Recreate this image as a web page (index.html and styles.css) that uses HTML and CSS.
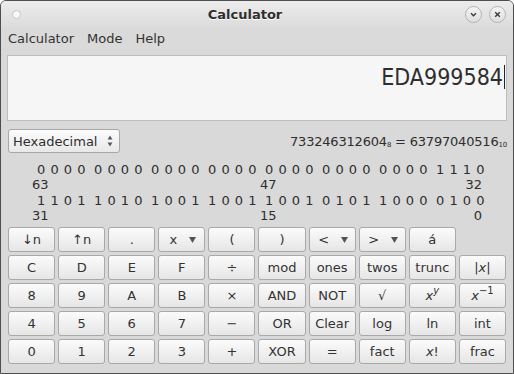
FILE: index.html
```html
<!DOCTYPE html>
<html lang="en">
<head>
  <meta charset="UTF-8">
  <title>Calculator</title>
  <link rel="stylesheet" href="styles.css">
</head>
<body>
  <div class="window">
    <header class="titlebar">
      <div class="title-left"><span class="dot"></span></div>
      <h1>Calculator</h1>
      <div class="wm-buttons">
        <span class="wm-btn">
          <svg width="15" height="15" viewBox="0 0 15 15"><path d="M5 6.3 L7.5 8.8 L10 6.3" fill="none" stroke="#3c3c3c" stroke-width="1.4"/></svg>
        </span>
        <span class="wm-btn">
          <svg width="15" height="15" viewBox="0 0 15 15"><path d="M5.2 5.2 L9.8 9.8 M9.8 5.2 L5.2 9.8" fill="none" stroke="#3c3c3c" stroke-width="1.4"/></svg>
        </span>
      </div>
    </header>

    <nav class="menubar">
      <span>Calculator</span>
      <span>Mode</span>
      <span>Help</span>
    </nav>

    <div class="display">
      <span class="value">EDA999584</span><span class="cursor"></span>
    </div>

    <div class="base-row">
      <div class="combo">
        <span>Hexadecimal</span>
        <svg width="8" height="14" viewBox="0 0 8 14"><path d="M4 1.5 L6.5 5.5 L1.5 5.5 Z M4 12.5 L6.5 8.5 L1.5 8.5 Z" fill="#5a5a5a"/></svg>
      </div>
      <div class="conv">733246312604<sub>8</sub> = 63797040516<sub>10</sub></div>
    </div>

    <div class="bits">
      <span class="grp">0 0 0 0</span><span class="grp">0 0 0 0</span><span class="grp">0 0 0 0</span><span class="grp">0 0 0 0</span>
      <span class="grp">0 0 0 0</span><span class="grp">0 0 0 0</span><span class="grp">0 0 0 0</span><span class="grp">1 1 1 0</span>
      <span class="lbl">63</span><span class="lbl mid">47</span><span class="lbl end">32</span>
      <span class="grp">1 1 0 1</span><span class="grp">1 0 1 0</span><span class="grp">1 0 0 1</span><span class="grp">1 0 0 1</span>
      <span class="grp">1 0 0 1</span><span class="grp">0 1 0 1</span><span class="grp">1 0 0 0</span><span class="grp">0 1 0 0</span>
      <span class="lbl">31</span><span class="lbl mid">15</span><span class="lbl end">0</span>
    </div>

    <div class="keys">
      <button>↓n</button>
      <button>↑n</button>
      <button>.</button>
      <button class="drop"><span>x</span><svg width="7" height="6" viewBox="0 0 7 6"><path d="M0 0 L7 0 L3.5 6 Z" fill="#555"/></svg></button>
      <button>(</button>
      <button>)</button>
      <button class="drop"><span>&lt;</span><svg width="7" height="6" viewBox="0 0 7 6"><path d="M0 0 L7 0 L3.5 6 Z" fill="#555"/></svg></button>
      <button class="drop"><span>&gt;</span><svg width="7" height="6" viewBox="0 0 7 6"><path d="M0 0 L7 0 L3.5 6 Z" fill="#555"/></svg></button>
      <button>á</button>
      <span></span>

      <button>C</button>
      <button>D</button>
      <button>E</button>
      <button>F</button>
      <button>÷</button>
      <button>mod</button>
      <button>ones</button>
      <button>twos</button>
      <button>trunc</button>
      <button><span>|<i>x</i>|</span></button>

      <button>8</button>
      <button>9</button>
      <button>A</button>
      <button>B</button>
      <button>×</button>
      <button>AND</button>
      <button>NOT</button>
      <button>√</button>
      <button><span><i>x</i><sup><i>y</i></sup></span></button>
      <button><span><i>x</i><sup>−1</sup></span></button>

      <button>4</button>
      <button>5</button>
      <button>6</button>
      <button>7</button>
      <button>−</button>
      <button>OR</button>
      <button>Clear</button>
      <button>log</button>
      <button>ln</button>
      <button>int</button>

      <button>0</button>
      <button>1</button>
      <button>2</button>
      <button>3</button>
      <button>+</button>
      <button>XOR</button>
      <button>=</button>
      <button>fact</button>
      <button><span><i>x</i>!</span></button>
      <button>frac</button>
    </div>
  </div>
</body>
</html>
```

FILE: styles.css
```css
body {
  margin: 0;
  background: #ffffff;
  font-family: 'DejaVu Sans', sans-serif;
  font-size: 13px;
  color: #333333;
}

.window {
  box-sizing: border-box;
  width: 514px;
  height: 374px;
  border: 1px solid #4e4e4e;
  border-radius: 6px 6px 0 0;
  background: #d9d9d9;
  overflow: hidden;
}

/* barra de titulo */
.titlebar {
  height: 26px;
  display: flex;
  align-items: center;
  padding: 0 7px;
  background: linear-gradient(to bottom, #ececec, #dcdcdc);
}

.title-left {
  width: 22px;
  display: flex;
  align-items: center;
}

.dot {
  width: 7px;
  height: 7px;
  margin-left: 4px;
  border-radius: 50%;
  background: #f8f8f8;
  border: 1px solid #c4c4c4;
}

.titlebar h1 {
  flex: 1;
  margin: 0;
  text-align: center;
  font-size: 13px;
  font-weight: bold;
  color: #2e2e2e;
  text-shadow: 0 1px 0 #ffffff;
}

.wm-buttons {
  display: flex;
  gap: 7px;
  margin-left: 5px;
}

.wm-btn {
  width: 15px;
  height: 15px;
  border-radius: 50%;
  border: 1px solid #b4b4b4;
  background: linear-gradient(to bottom, #f4f4f4, #dedede);
  display: flex;
  align-items: center;
  justify-content: center;
}

/* menu */
.menubar {
  height: 22px;
  display: flex;
  align-items: center;
  gap: 13px;
  padding-left: 7px;
  background: #dadada;
}

/* visor */
.display {
  margin: 6px 6px 0 6px;
  border: 1px solid #bdbdbd;
  background: #f6f6f6;
  display: flex;
  justify-content: flex-end;
  align-items: flex-start;
  padding: 8px 1px 0 0;
  height: 56px;
}

.display .value {
  font-family: 'DejaVu Sans Condensed', 'DejaVu Sans', sans-serif;
  font-stretch: condensed;
  font-size: 23px;
  color: #2e2e2e;
  line-height: 27px;
}

.display .cursor {
  width: 1px;
  height: 24px;
  margin-top: 1px;
  margin-left: 1px;
  background: #222222;
}

.base-row {
  margin: 8px 6px 0 7px;
  display: flex;
  justify-content: space-between;
  align-items: center;
}

.combo {
  box-sizing: border-box;
  width: 112px;
  height: 24px;
  border: 1px solid #a8a8a8;
  border-radius: 3px;
  background: linear-gradient(to bottom, #fcfcfc, #e8e8e8);
  display: flex;
  align-items: center;
  justify-content: space-between;
  padding: 0 5px 0 4px;
  color: #2e2e2e;
}

.conv {
  color: #2e2e2e;
  letter-spacing: -0.2px;
}

.conv sub {
  font-size: 7px;
  vertical-align: -1px;
}

/* bits */
.bits {
  margin: 9px 0 0 31px;
  display: grid;
  grid-template-columns: repeat(8, 57px);
  line-height: 15.3px;
  color: #2e2e2e;
}

.grp {
  white-space: pre;
  padding-left: 5px;
  word-spacing: 1px;
}

.lbl {
  grid-column: 1 / span 4;
}

.lbl.mid {
  grid-column: 5 / span 3;
}

.lbl.end {
  grid-column: 8;
  text-align: right;
  padding-right: 6px;
}

/* teclas */
.keys {
  margin: 4px 7px 0 7px;
  display: grid;
  grid-template-columns: repeat(10, 1fr);
  grid-template-rows: repeat(5, 25px);
  gap: 3px;
}

.keys button {
  font-family: 'DejaVu Sans', sans-serif;
  font-size: 13px;
  color: #333333;
  border: 1px solid #a9a9a9;
  border-radius: 3px;
  background: linear-gradient(to bottom, #fbfbfb, #e6e6e6);
  padding: 0;
  display: flex;
  align-items: center;
  justify-content: center;
}

.keys button.drop {
  gap: 12px;
  padding-left: 2px;
}

.keys sup {
  font-size: 10px;
  line-height: 0;
  vertical-align: 6px;
}
```
